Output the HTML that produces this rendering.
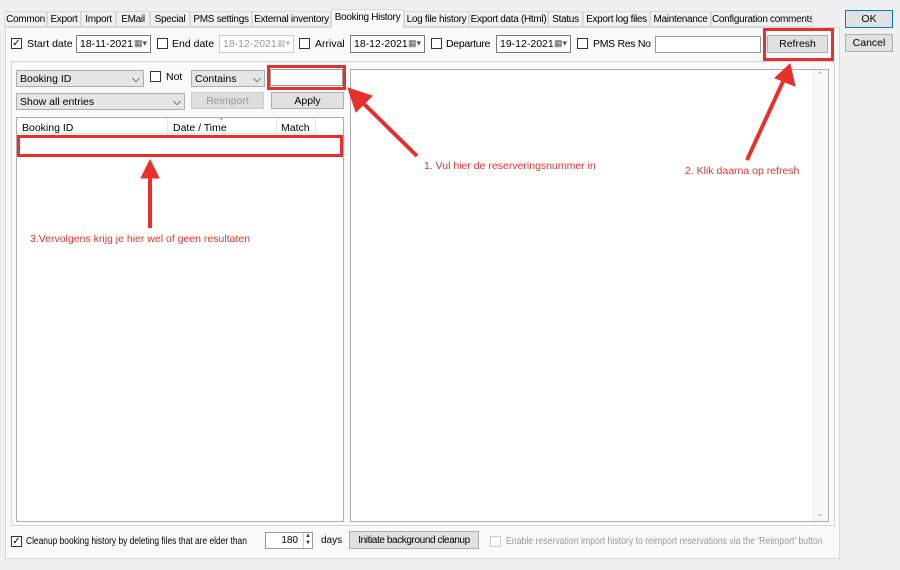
<!DOCTYPE html>
<html><head><style>
*{box-sizing:border-box}
body{margin:0;width:900px;height:570px;background:#f0f0f0;font-family:"Liberation Sans",sans-serif;font-size:10.5px;color:#000;position:relative;overflow:hidden}
.a{position:absolute;white-space:nowrap}
.tab{position:absolute;top:11px;height:16px;border:1px solid #d9d9d9;background:#f0f0f0;padding:2px 0 0;text-align:center;font-size:10px;white-space:nowrap;overflow:hidden;letter-spacing:-0.3px}
.box{position:absolute;background:#fff;border:1px solid #7a7a7a;white-space:nowrap;overflow:hidden}
.dis{border-color:#ccc;color:#999}
.btn{position:absolute;background:#e1e1e1;border:1px solid #adadad;text-align:center;padding-top:3px;white-space:nowrap}
.cb{position:absolute;width:11px;height:11px;border:1px solid #333;background:#fff}
.cmb{position:absolute;background:#e5e5e5;border:1px solid #adadad;padding:2px 3px;white-space:nowrap}
.red{position:absolute;border:3px solid #e8302a}
.rt{position:absolute;color:#e8302a;font-size:10.5px;white-space:nowrap}
.dt{padding:2px 3px;font-size:10.5px}
.dt i{position:absolute;right:3px;top:2px;font-style:normal;font-size:9px;color:#555}
.sx{transform-origin:left top}
</style></head><body>
<div class="a" style="left:5px;top:27px;width:835px;height:532px;background:#f9f9f9;border:1px solid #d9d9d9"></div>
<div class="tab" style="left:4px;width:43px">Common</div>
<div class="tab" style="left:47px;width:34px">Export</div>
<div class="tab" style="left:81px;width:35px">Import</div>
<div class="tab" style="left:116px;width:34px">EMail</div>
<div class="tab" style="left:150px;width:40px">Special</div>
<div class="tab" style="left:190px;width:62px">PMS settings</div>
<div class="tab" style="left:252px;width:79px">External inventory</div>
<div class="tab" style="left:331px;top:9px;height:19px;width:73px;background:#f9f9f9;border-bottom:none">Booking History</div>
<div class="tab" style="left:404px;width:65px">Log file history</div>
<div class="tab" style="left:469px;width:79px">Export data (Html)</div>
<div class="tab" style="left:548px;width:35px">Status</div>
<div class="tab" style="left:583px;width:67px">Export log files</div>
<div class="tab" style="left:650px;width:61px">Maintenance</div>
<div class="tab" style="left:711px;width:102px">Configuration comments</div>
<div class="btn" style="left:845px;top:10px;width:48px;height:18px;border:1px solid #0078d7;padding-top:2px">OK</div>
<div class="btn" style="left:845px;top:34px;width:48px;height:18px;padding-top:2px">Cancel</div>

<div class="cb" style="left:11px;top:38px;font-size:10px;line-height:9px;text-align:center">✓</div>
<div class="a" style="left:27px;top:38px">Start date</div>
<div class="box dt" style="left:76px;top:35px;width:75px;height:18px">18-11-2021<i>▦▾</i></div>
<div class="cb" style="left:157px;top:38px"></div><div class="a" style="left:172px;top:38px">End date</div>
<div class="box dis dt" style="left:219px;top:35px;width:75px;height:18px">18-12-2021<i style="color:#bbb">▦▾</i></div>
<div class="cb" style="left:299px;top:38px"></div><div class="a" style="left:315px;top:38px">Arrival</div>
<div class="box dt" style="left:350px;top:35px;width:75px;height:18px">18-12-2021<i>▦▾</i></div>
<div class="cb" style="left:431px;top:38px"></div><div class="a" style="left:446px;top:38px;letter-spacing:-0.3px">Departure</div>
<div class="box dt" style="left:496px;top:35px;width:75px;height:18px">19-12-2021<i>▦▾</i></div>
<div class="cb" style="left:577px;top:38px"></div><div class="a" style="left:593px;top:38px;letter-spacing:-0.3px">PMS Res No</div>
<div class="box" style="left:655px;top:36px;width:106px;height:17px;border-color:#999"></div>
<div class="btn" style="left:767px;top:35px;width:61px;height:18px;padding-top:2px">Refresh</div>

<div class="a" style="left:11px;top:61px;width:824px;height:465px;border:1px solid #d5d5d5"></div>
<div class="cmb" style="left:16px;top:70px;width:128px;height:17px">Booking ID<span style="float:right">⌵</span></div>
<div class="cb" style="left:150px;top:71px"></div><div class="a" style="left:166px;top:71px">Not</div>
<div class="cmb" style="left:191px;top:70px;width:74px;height:17px">Contains<span style="float:right">⌵</span></div>
<div class="box" style="left:270px;top:69px;width:73px;height:17px;border-color:#999"></div>
<div class="cmb" style="left:16px;top:93px;width:169px;height:17px">Show all entries<span style="float:right">⌵</span></div>
<div class="btn" style="left:191px;top:92px;width:73px;height:17px;color:#999;border-color:#ccc;background:#ddd;padding-top:2px">Reimport</div>
<div class="btn" style="left:271px;top:92px;width:73px;height:17px;padding-top:2px">Apply</div>
<div class="box" style="left:16px;top:117px;width:328px;height:405px;border-color:#adadad"></div>
<div class="a" style="left:17px;top:118px;width:298px;height:16px;border-bottom:1px solid #e5e5e5"></div>
<div class="a" style="left:22px;top:122px">Booking ID</div>
<div class="a" style="left:167px;top:118px;height:16px;border-left:1px solid #e5e5e5"></div>
<div class="a" style="left:173px;top:122px">Date / Time</div>
<div class="a" style="left:218px;top:113px;font-size:8px;color:#888">⌄</div>
<div class="a" style="left:276px;top:118px;height:16px;border-left:1px solid #e5e5e5"></div>
<div class="a" style="left:281px;top:122px">Match</div>
<div class="a" style="left:315px;top:118px;height:16px;border-left:1px solid #e5e5e5"></div>
<div class="box" style="left:350px;top:69px;width:479px;height:453px;border-color:#adadad"></div>
<div class="a" style="left:812px;top:70px;width:16px;height:451px;background:#f7f7f7;color:#aaa;font-size:9px;text-align:center">⌃<div style="position:absolute;bottom:2px;width:16px">⌄</div></div>

<div class="cb" style="left:11px;top:536px;font-size:10px;line-height:9px;text-align:center">✓</div>
<div class="a sx" style="left:26px;top:536px;font-size:10px;transform:scaleX(0.84)">Cleanup booking history by deleting files that are elder than</div>
<div class="box" style="left:265px;top:532px;width:48px;height:17px;text-align:right;padding:2px 14px 0 0;font-size:10px;border-color:#999">180</div>
<div class="a" style="left:303px;top:533px;width:9px;height:15px;border-left:1px solid #ccc;font-size:6px;line-height:7px;text-align:center;color:#333">▲<br>▼</div>
<div class="a" style="left:321px;top:535px;font-size:10px">days</div>
<div class="btn" style="left:349px;top:531px;width:130px;height:18px;font-size:10px;padding-top:3px;letter-spacing:-0.4px">Initiate background cleanup</div>
<div class="cb" style="left:490px;top:536px;border-color:#ccc"></div>
<div class="a sx" style="left:506px;top:536px;font-size:10px;color:#999;transform:scaleX(0.87)">Enable reservation import history to reimport reservations via the 'Reimport' button</div>

<div class="red" style="left:267px;top:65px;width:79px;height:25px"></div>
<div class="red" style="left:763px;top:28px;width:71px;height:33px"></div>
<div class="red" style="left:17px;top:135px;width:326px;height:22px"></div>
<svg class="a" style="left:0;top:0" width="900" height="570">
<g stroke="#e8302a" stroke-width="4" fill="#e8302a">
<line x1="417" y1="156" x2="358" y2="98"/><polygon points="348,88 372,96 356,112" stroke-width="1"/>
<line x1="747" y1="160" x2="786" y2="75"/><polygon points="790,64 795,86 775,78" stroke-width="1"/>
<line x1="150" y1="228" x2="150" y2="172"/><polygon points="150,160 159,178 141,178" stroke-width="1"/>
</g></svg>
<div class="rt" style="left:424px;top:160px">1. Vul hier de reserveringsnummer in</div>
<div class="rt" style="left:685px;top:165px">2. Klik daarna op refresh</div>
<div class="rt" style="left:30px;top:233px">3.Vervolgens krijg je hier wel of geen resultaten</div>
</body></html>
